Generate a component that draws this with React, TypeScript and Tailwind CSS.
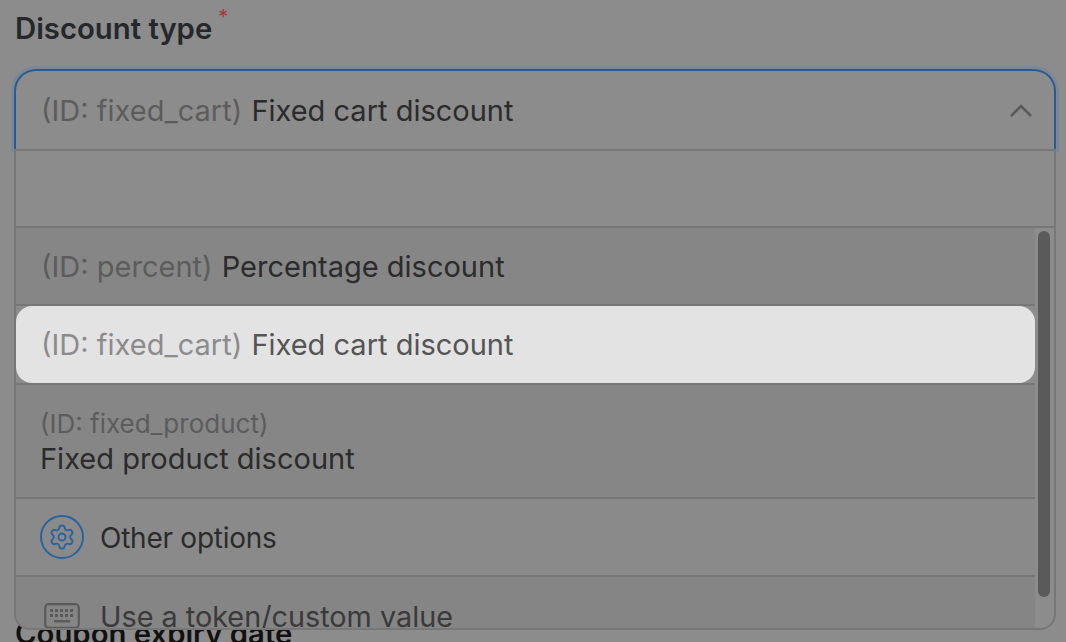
import { Settings } from "lucide-react";

function OptionId({ id, light }: { id: string; light?: boolean }) {
  return <span className={`mr-px ${light ? "text-[#8b8b8b]" : "text-[#5c5c5c]"}`}>(ID: {id})</span>;
}

function KeyboardIcon() {
  return (
    <svg width="36" height="26" viewBox="0 0 36 26" fill="none">
      <rect x="1.2" y="1.2" width="33.6" height="23.6" rx="3.5" stroke="#5a5a5a" strokeWidth="2.2" />
      <g fill="#5a5a5a">
        <rect x="6" y="6" width="3" height="3" />
        <rect x="11" y="6" width="3" height="3" />
        <rect x="16" y="6" width="3" height="3" />
        <rect x="21" y="6" width="3" height="3" />
        <rect x="26" y="6" width="3" height="3" />
        <rect x="6" y="11" width="3" height="3" />
        <rect x="11" y="11" width="3" height="3" />
        <rect x="16" y="11" width="3" height="3" />
        <rect x="21" y="11" width="3" height="3" />
        <rect x="26" y="11" width="3" height="3" />
        <rect x="10" y="17" width="16" height="2.5" />
      </g>
    </svg>
  );
}

export default function App() {
  return (
    <div className="h-[642px] w-[1066px] overflow-hidden bg-[#8c8c8c] font-['Inter',sans-serif] text-[29px] text-[#2b2b2b]">
      <div className="flex h-[69px] items-start pl-[15px] pt-[11px]">
        <span className="text-[29.3px] leading-[36px] font-semibold text-[#25282b]">Discount type</span>
        <span className="ml-[6px] -mt-px text-[20px] leading-[14px] text-[#a33a3a]">*</span>
      </div>

      <div className="relative mx-[14px] w-[1042px]">
        <div className="flex h-[80px] items-center justify-between rounded-t-[22px] border-x-2 border-t-2 border-[#2a5a94] pl-[25px] pr-[22px] pt-[2px] shadow-[0_0_0_3px_#7b8796]">
          <div className="whitespace-nowrap">
            <OptionId id="fixed_cart" /> Fixed cart discount
          </div>
          <svg width="22" height="14" viewBox="0 0 22 14" fill="none" className="-mt-[2px]">
            <path d="M1 13 L11 3 L21 13" stroke="#5a5a5a" strokeWidth="2.5" />
          </svg>
        </div>

        <div className="absolute left-0 top-[80px] z-10 flex h-[481px] w-full flex-col overflow-hidden rounded-b-[16px] border-2 border-[#777777] bg-[#8c8c8c]">
          <div className="h-[77px] shrink-0 border-b-2 border-[#777777]" />
          <div className="flex min-h-0 flex-1">
            <div className="min-w-0 flex-1">
              <div className="flex h-[78px] items-center border-b-2 border-[#777777] bg-[#868686] pl-[25px] pt-[2px]">
                <div className="whitespace-nowrap">
                  <OptionId id="percent" /> Percentage discount
                </div>
              </div>
              <div className="flex h-[77px] items-center rounded-[16px] bg-[#e3e3e3] pl-[25px] text-[#555555]">
                <div className="whitespace-nowrap">
                  <OptionId id="fixed_cart" light /> Fixed cart discount
                </div>
              </div>
              <div className="flex h-[116px] flex-col justify-center border-y-2 border-[#777777] bg-[#868686] pl-[24px] pt-[2px]">
                <div className="text-[26px] leading-[34px] text-[#5c5c5c]">(ID: fixed_product)</div>
                <div className="leading-[36px]">Fixed product discount</div>
              </div>
              <div className="flex h-[78px] items-center gap-[16px] border-b-2 border-[#777777] bg-[#8a8a8a] pl-[24px]">
                <div className="flex size-[44px] items-center justify-center rounded-full border-2 border-[#2a62a0]">
                  <Settings size={28} strokeWidth={1.6} color="#2a62a0" />
                </div>
                <span className="pt-[2px] text-[28px] tracking-[-0.25px]">Other options</span>
              </div>
              <div className="flex h-[78px] items-center gap-[20px] bg-[#858585] pl-[28px] text-[#3a3a3a]">
                <KeyboardIcon />
                <span className="pt-[2px] text-[28.8px]">Use a token/custom value</span>
              </div>
            </div>
            <div className="w-[19px] shrink-0 pl-[3px] pt-[3px]">
              <div className="h-[366px] w-[12px] rounded-full bg-[#5a5a5a]" />
            </div>
          </div>
        </div>
      </div>

      <div className="mt-[467px] pl-[15px] text-[29.3px] leading-[36px] font-semibold text-[#111111]">Coupon expiry date</div>
    </div>
  );
}
